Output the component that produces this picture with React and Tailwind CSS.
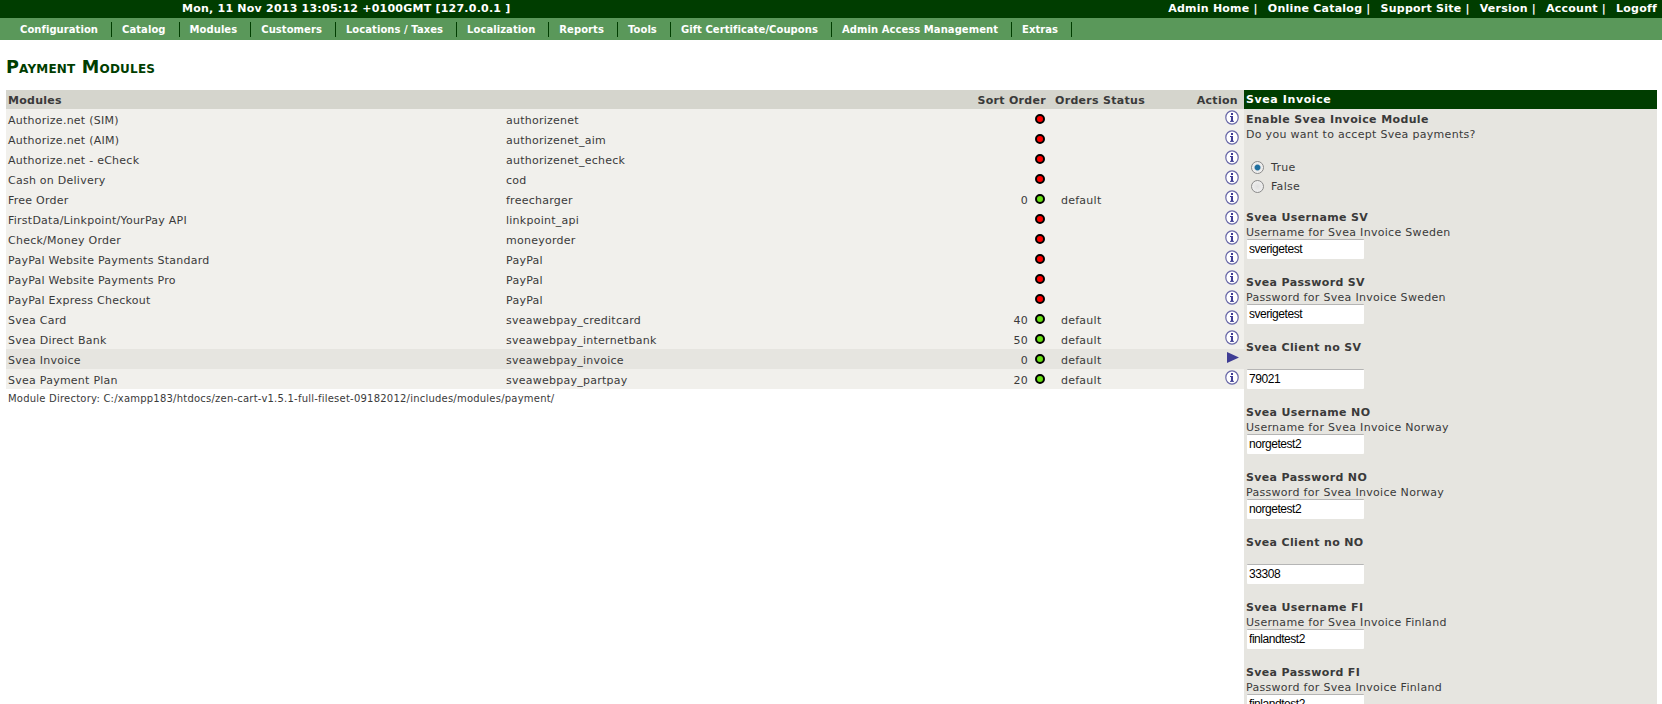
import React from "react";

const navItems = ["Configuration", "Catalog", "Modules", "Customers", "Locations / Taxes", "Localization", "Reports", "Tools", "Gift Certificate/Coupons", "Admin Access Management", "Extras"];
const topLinks = ["Admin Home", "Online Catalog", "Support Site", "Version", "Account", "Logoff"];

const modules = [
  { name: "Authorize.net (SIM)", code: "authorizenet" },
  { name: "Authorize.net (AIM)", code: "authorizenet_aim" },
  { name: "Authorize.net - eCheck", code: "authorizenet_echeck" },
  { name: "Cash on Delivery", code: "cod" },
  { name: "Free Order", code: "freecharger", sort: "0", status: "default" },
  { name: "FirstData/Linkpoint/YourPay API", code: "linkpoint_api" },
  { name: "Check/Money Order", code: "moneyorder" },
  { name: "PayPal Website Payments Standard", code: "PayPal" },
  { name: "PayPal Website Payments Pro", code: "PayPal" },
  { name: "PayPal Express Checkout", code: "PayPal" },
  { name: "Svea Card", code: "sveawebpay_creditcard", sort: "40", status: "default" },
  { name: "Svea Direct Bank", code: "sveawebpay_internetbank", sort: "50", status: "default" },
  { name: "Svea Invoice", code: "sveawebpay_invoice", sort: "0", status: "default", selected: true },
  { name: "Svea Payment Plan", code: "sveawebpay_partpay", sort: "20", status: "default" },
];

const fields = [
  { title: "Svea Username SV", desc: "Username for Svea Invoice Sweden", value: "sverigetest" },
  { title: "Svea Password SV", desc: "Password for Svea Invoice Sweden", value: "sverigetest" },
  { title: "Svea Client no SV", desc: "", value: "79021" },
  { title: "Svea Username NO", desc: "Username for Svea Invoice Norway", value: "norgetest2" },
  { title: "Svea Password NO", desc: "Password for Svea Invoice Norway", value: "norgetest2" },
  { title: "Svea Client no NO", desc: "", value: "33308" },
  { title: "Svea Username FI", desc: "Username for Svea Invoice Finland", value: "finlandtest2" },
  { title: "Svea Password FI", desc: "Password for Svea Invoice Finland", value: "finlandtest2" },
];

const InfoIcon = () => (
  <svg width="14" height="15" viewBox="0 0 14 15" className="block">
    <ellipse cx="7" cy="7.5" rx="6.2" ry="6.7" fill="#fff" stroke="#6a69a8" strokeWidth="1.2" />
    <rect x="6" y="6" width="2" height="5.5" fill="#3f3d94" />
    <rect x="5" y="10.8" width="4" height="1" fill="#3f3d94" />
    <rect x="5" y="6" width="2" height="1" fill="#3f3d94" />
    <rect x="6" y="3" width="2" height="2" fill="#3f3d94" />
  </svg>
);

const ArrowIcon = () => (
  <svg width="12" height="11" viewBox="0 0 12 11" className="block">
    <path d="M0 0 L12 5.5 L0 11 Z" fill="#3f3d94" />
  </svg>
);

const Dot = ({ on }) => (
  <span className={`block w-[10px] h-[10px] rounded-full border-2 border-black ${on ? "bg-[#66dd11]" : "bg-[#ff0000]"}`}></span>
);

const Radio = ({ checked, label }) => (
  <label className="flex items-center h-[19px] pl-[5px]">
    <input
      type="radio"
      readOnly
      checked={checked}
      className={`appearance-none w-[13px] h-[13px] rounded-full border border-[#8a8a8a] ${
        checked
          ? "bg-[radial-gradient(circle,#1f6f9f_0,#1f6f9f_30%,#e8e8e8_45%,#fff_100%)]"
          : "bg-[radial-gradient(circle,#e0e0e0_0,#f4f4f4_100%)]"
      }`}
    />
    <span className="ml-[7px] mt-[3px]">{label}</span>
  </label>
);

const Field = ({ title, desc, value }) => (
  <div className="h-[65px]">
    <div className="h-[15px] leading-[15px] font-bold tracking-[0.35px]">{title}</div>
    <div className="h-[15px] leading-[15px]">{desc}</div>
    <input
      readOnly
      value={value}
      className="block ml-[1px] -mt-[1px] w-[117px] h-[20px] px-[2px] bg-white border-t border-[#b5b5b5] rounded-[1px] text-black text-[12px] tracking-[-0.45px] outline-none font-['Liberation_Sans',Arial,sans-serif]"
    />
  </div>
);

export default function App() {
  return (
    <div className="h-screen overflow-hidden bg-white text-[#3a3a3a] text-[11px] font-['DejaVu_Sans',Verdana,sans-serif]">
      {/* Header */}
      <div className="h-[18px] bg-[#003d00] text-white font-bold flex items-center justify-between pl-[182px] pr-[5px] pt-[1px] tracking-[0.23px]">
        <span>Mon, 11 Nov 2013 13:05:12 +0100GMT [127.0.0.1 ]</span>
        <div className="flex">
          {topLinks.map((link, i) => (
            <span key={link} className={i < topLinks.length - 1 ? "mr-[10px]" : ""}>
              {link}
              {i < topLinks.length - 1 ? " |" : ""}
            </span>
          ))}
        </div>
      </div>
      <div className="h-[22px] bg-[#5a985a] flex items-center pl-[10px]">
        {navItems.map((item) => (
          <div key={item} className="h-[15px] flex items-center pt-[1px] pl-[10px] pr-[13px] border-r border-[#003d00] text-white text-[10px] tracking-[0.06px] font-bold">
            {item}
          </div>
        ))}
      </div>

      <h1 className="mt-[18px] ml-[6px] h-[18px] leading-[18px] text-[17.6px] tracking-[0.2px] font-bold text-[#003d00] [font-variant:small-caps]">Payment Modules</h1>

      <div className="flex mt-[14px] pl-[6px] pr-[5px] items-start">
        {/* Module table */}
        <div className="w-[1238px]">
          <table className="w-full table-fixed border-collapse tracking-[0.25px] leading-[14px]">
            <colgroup>
              <col className="w-[500px]" />
              <col className="w-[471px]" />
              <col className="w-[71px]" />
              <col className="w-[136px]" />
              <col />
            </colgroup>
            <thead>
              <tr className="h-[19px] bg-[#d5d5cd]">
                <th className="text-left pl-[2px] pt-[3px] font-bold">Modules</th>
                <th></th>
                <th className="text-right font-bold pr-[2px] pt-[3px] whitespace-nowrap tracking-[0.3px]">Sort Order</th>
                <th className="text-left font-bold pl-[7px] pt-[3px] whitespace-nowrap tracking-[0.3px]">Orders Status</th>
                <th className="text-right font-bold pr-[6px] pt-[3px] tracking-[0.3px]">Action</th>
              </tr>
            </thead>
            <tbody>
              {modules.map((m) => (
                <tr key={m.name} className={`h-[20px] ${m.selected ? "bg-[#e6e5e0]" : "bg-[#f1f0ec]"}`}>
                  <td className="pl-[2px] pt-[3px]">{m.name}</td>
                  <td className="pt-[3px]">{m.code}</td>
                  <td className="pr-[3px]">
                    <div className="flex items-center justify-end">
                      {m.sort && <span className="mr-[7px] mt-[3px]">{m.sort}</span>}
                      <Dot on={!!m.sort} />
                    </div>
                  </td>
                  <td className="pl-[13px] pt-[3px]">{m.status}</td>
                  <td className="pb-[4px]">
                    <div className="flex justify-end pr-[5px]">
                      {m.selected ? <ArrowIcon /> : <InfoIcon />}
                    </div>
                  </td>
                </tr>
              ))}
            </tbody>
          </table>
          <div className="mt-[4px] pl-[2px] text-[10px] tracking-[0.22px] leading-[12px]">
            Module Directory: C:/xampp183/htdocs/zen-cart-v1.5.1-full-fileset-09182012/includes/modules/payment/
          </div>
        </div>

        {/* Side panel */}
        <div className="w-[413px] tracking-[0.3px]">
          <div className="h-[19px] leading-[20px] bg-[#003d00] text-white font-bold pl-[2px] tracking-[0.6px]">Svea Invoice</div>
          <div className="bg-[#e6e5e0] pl-[2px] pt-[2.5px] pb-[20px]">
            <div className="h-[15px] leading-[15px] font-bold tracking-[0.37px]">Enable Svea Invoice Module</div>
            <div className="h-[15px] leading-[15px]">Do you want to accept Svea payments?</div>
            <div className="pt-[16px] pb-[14px]">
              <Radio checked label="True" />
              <Radio checked={false} label="False" />
            </div>
            {fields.map((f) => (
              <Field key={f.title} {...f} />
            ))}
          </div>
        </div>
      </div>
    </div>
  );
}
